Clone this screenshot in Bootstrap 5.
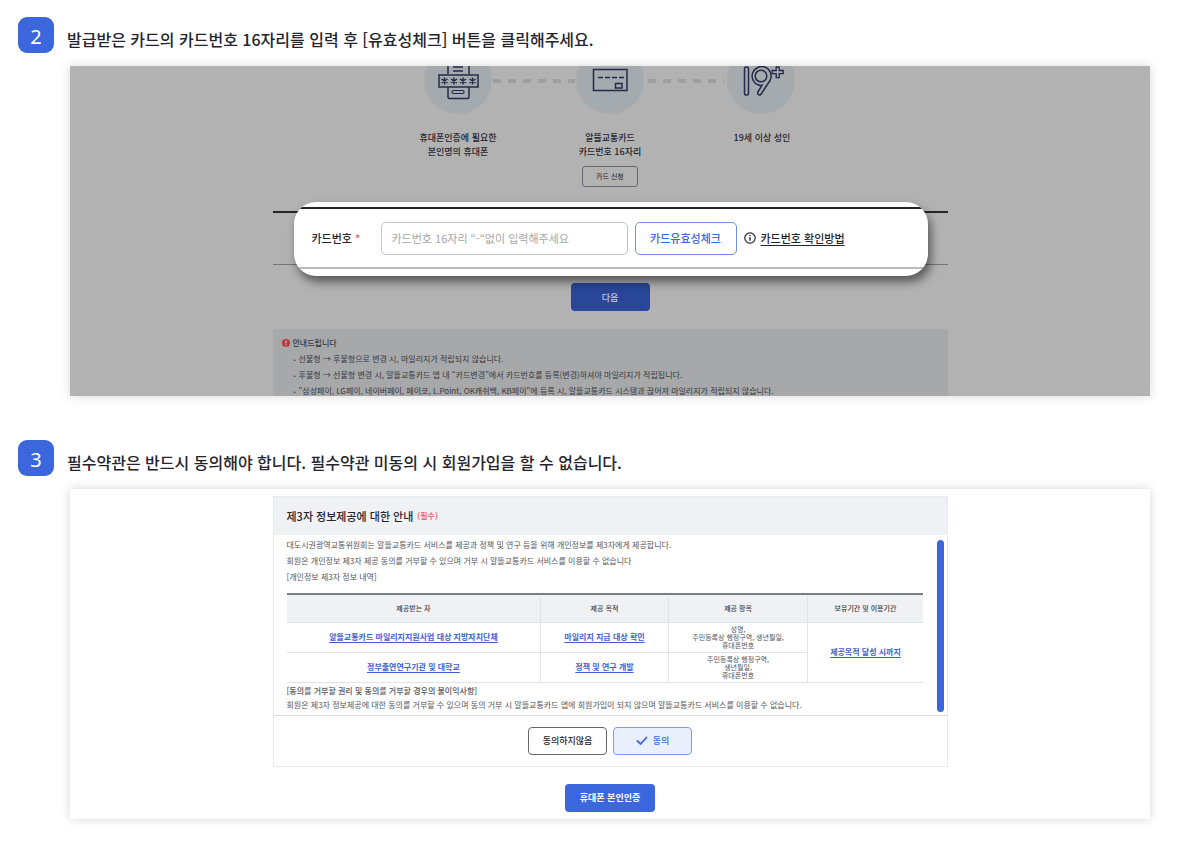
<!DOCTYPE html>
<html lang="ko">
<head>
<meta charset="utf-8">
<meta name="viewport" content="width=device-width, initial-scale=1">
<title>회원가입 안내</title>
<link href="https://cdn.jsdelivr.net/npm/bootstrap@5.3.0/dist/css/bootstrap.min.css" rel="stylesheet">
<style>
  :root { --brand: #3b66dc; --ink: #24242e; }
  body { font-family: "Noto Sans CJK KR", "Liberation Sans", sans-serif; color: var(--ink); background: #fff; }
  .guide { padding: 17px 40px 30px 18px; }
  .step + .step { margin-top: 44px; }
  .step-no { width: 36px; height: 36px; border-radius: 9px; background: var(--brand); color: #fff; font: 20px/40px "Noto Sans", sans-serif; text-align: center; flex: none; }
  .step-title { font-size: 16px; line-height: 24px; font-weight: 500; color: var(--ink); margin: 10px 0 0 13px; }
  .shot { margin: 13px 0 0 52px; box-shadow: 0 0 10px rgba(0,0,0,.16); overflow: hidden; }
  .pane { width: 100%; max-width: 675px; margin: 0 auto; }
  .btn { --bs-btn-padding-x: 0; --bs-btn-padding-y: 0; --bs-btn-border-radius: 4px; --bs-btn-line-height: 1; }

  .dimmed { background: #b2b2b2; }
  .needs { max-width: 456px; margin: 0 auto; }
  .needs svg { display: block; width: 100%; height: auto; }
  .needs-labels { padding-top: 17px; height: 97px; font-size: 9px; line-height: 14px; font-weight: 500; }
  .apply-btn { --bs-btn-font-size: 7px; --bs-btn-border-color: #666870; --bs-btn-color: #24242e; --bs-btn-border-radius: 3px; width: 56px; height: 21px; margin-top: 7px; }
  .field-band { height: 54px; border-top: 2px solid #25252b; border-bottom: 1px solid #75767a; }
  .spotlight { top: -11px; left: 21px; right: 20px; height: 74px; border-radius: 22px; background: #fff; box-shadow: 3px 6px 10px rgba(0,0,0,.5); padding: 5px 0 7px; overflow: hidden; }
  .spotlight-row { height: 62px; border-top: 2px solid #24242c; border-bottom: 2px solid #bcbcbc; padding: 0 18px; font-size: 11px; font-weight: 500; }
  .req { color: #f0565b; }
  .card-label { width: 69px; }
  .card-input { width: 247px; height: 33px; font-size: 11px; border-color: #c4c4c8; border-radius: 5px; padding: 0 10px; }
  .card-input::placeholder { color: #a5a5a8; }
  .check-btn { --bs-btn-font-size: 11px; --bs-btn-font-weight: 500; --bs-btn-color: #3b66dc; --bs-btn-border-color: #6d8de6; --bs-btn-border-radius: 5px; width: 102px; height: 33px; margin: 0 7px; }
  .how-link { color: var(--ink); margin-left: 5px; text-underline-offset: 2px; }
  .next-btn { --bs-btn-bg: #294698; --bs-btn-color: #c3cbe0; --bs-btn-font-size: 9px; --bs-btn-font-weight: 500; width: 79px; height: 28px; margin: 18px 0; }
  .notice { background: #a7a8aa; border-radius: 3px 3px 0 0; padding: 6px 9px 0; font-size: 8px; line-height: 16px; color: #37383f; }
  .notice-title { font-weight: 500; gap: 3px; }
  .notice ul { list-style: none; padding: 0; margin: 0 0 -3px 12px; }
  .notice li { height: 16px; white-space: nowrap; }
  .notice li::before { content: "•"; font-size: 6px; line-height: 1; margin-right: 3px; }

  .consent { border: 1px solid #eaeaec; }
  .consent-shot { padding: 7px 0; }
  .consent-head { background: #f0f1f5; height: 38px; padding: 0 13px; font-size: 11px; font-weight: 500; }
  .consent-head small { font-size: 8px; margin-left: 4px; }
  .consent-body { padding: 2px 3px 3px 13px; font-size: 8px; line-height: 16px; color: #55555c; border-bottom: 1px solid #dcdde0; }
  .scroll-thumb { width: 7px; border-radius: 4px; background: var(--brand); margin: 3px 0 0 14px; flex: none; }
  .terms { table-layout: fixed; width: 100%; margin: 8px 0 1px; font-size: 7px; line-height: 8px; text-align: center; border-top: 2px solid #7b7d83; border-bottom: 1px solid #cfd0d3; border-collapse: collapse; }
  .terms th { background: #f0f1f5; font-weight: 500; height: 28px; color: #3c3c44; }
  .terms td { height: 30px; }
  .terms th, .terms td { padding: 0; border: 0 solid #e2e3e6; border-bottom-width: 1px; vertical-align: middle; }
  .terms th + th, .terms td + td { border-left-width: 1px; }
  .terms a { color: #3f5fd0; font-size: 8px; font-weight: 700; text-underline-offset: 2px; }
  .terms-foot { line-height: 14px; }
  .choices { height: 50px; gap: 6px; }
  .choices .btn { --bs-btn-font-size: 9px; --bs-btn-font-weight: 500; width: 79px; height: 28px; }
  .no-btn { --bs-btn-color: #24242e; --bs-btn-border-color: #66676d; }
  .yes-btn { --bs-btn-color: #3b66dc; --bs-btn-bg: #e9effb; --bs-btn-border-color: #7f9ce6; gap: 5px; }
  .verify-btn { --bs-btn-bg: #3b66dc; --bs-btn-color: #fff; --bs-btn-font-size: 9px; --bs-btn-font-weight: 700; width: 90px; height: 28px; margin-top: 17px; }
</style>
</head>
<body>
<main class="guide">
  <section class="step">
    <div class="d-flex">
      <span class="step-no">2</span>
      <h2 class="step-title">발급받은 카드의 카드번호 16자리를 입력 후 [유효성체크] 버튼을 클릭해주세요.</h2>
    </div>
    <div class="shot dimmed">
      <div class="pane">
        <div class="needs">
          <svg viewBox="0 0 456 48" fill="none" stroke="#262a48" stroke-width="1.5" aria-hidden="true">
            <g fill="#a5aaaf" stroke="none"><circle cx="76" cy="14" r="34"/><circle cx="228" cy="14" r="34"/><circle cx="379" cy="14" r="34"/></g>
            <path d="M111 15h82M266 15h76" stroke="#9d9fa1" stroke-width="4" stroke-dasharray="8 7"/>
            <path d="M66 0v8M87 0v8M71 1h10M71 5h10M66 21v10q0 1.500 1.500 1.500h18q1.500 0 1.500-1.500V21"/>
            <rect x="57" y="9" width="39" height="12"/>
            <rect x="70" y="24.500" width="12" height="3" rx="1.500" stroke-width="1.200"/>
            <path d="M62.500 11.500v7M59.500 13l6 4M65.500 13l-6 4M72 11.500v7M69 13l6 4M75 13l-6 4M81 11.500v7M78 13l6 4M84 13l-6 4M90.500 11.500v7M87.500 13l6 4M93.500 13l-6 4" stroke-width="1.500"/>
            <rect x="211.500" y="3.500" width="33.500" height="21"/>
            <path d="M216 11.500h26" stroke-dasharray="5 2"/>
            <rect x="233.500" y="17.500" width="6.500" height="4.500"/>
            <rect x="362.500" y="1" width="4" height="28" rx="1.500"/>
            <path d="M376.500 19A9.500 9.500 0 1 1 388 14.500L379.500 27.500Q378 30 376.200 28.500Q375 27.500 376.200 25.500L380 19.300Q378 19.700 376.500 19Z"/>
            <circle cx="379" cy="10" r="5.800"/>
            <path d="M394.200 1h3v3.500h4v3.200h-4v4h-3v-4h-4V4.500h4Z" stroke-width="1.300"/>
          </svg>
          <div class="needs-labels d-flex text-center">
            <div class="col-4">휴대폰인증에 필요한<br>본인명의 휴대폰</div>
            <div class="col-4">알뜰교통카드<br>카드번호 16자리<br><button type="button" class="btn apply-btn">카드 신청</button></div>
            <div class="col-4">19세 이상 성인</div>
          </div>
        </div>
        <div class="field-band position-relative">
          <div class="spotlight position-absolute">
            <form class="spotlight-row d-flex align-items-center">
              <label class="card-label" for="cardNo">카드번호 <span class="req">*</span></label>
              <input class="form-control card-input" id="cardNo" type="text" placeholder="카드번호 16자리 “-“없이 입력해주세요">
              <button type="button" class="btn check-btn">카드유효성체크</button>
              <svg width="12" height="12" viewBox="0 0 12 12" fill="none" stroke="#24242e" aria-hidden="true"><circle cx="6" cy="6" r="5.200" stroke-width="1.200"/><path d="M6 5.200v3.600M6 3v1.300" stroke-width="1.400"/></svg>
              <a class="how-link" href="#">카드번호 확인방법</a>
            </form>
          </div>
        </div>
        <div class="d-flex justify-content-center"><button type="button" class="btn next-btn border-0">다음</button></div>
        <div class="notice">
          <div class="notice-title d-flex align-items-center">
            <svg width="8" height="8" viewBox="0 0 8 8" aria-hidden="true"><circle cx="4" cy="4" r="4" fill="#b93a3e"/><path d="M4 1.500v3M4 5.400v1.200" stroke="#d6c4c5" stroke-width="1.200"/></svg>
            안내드립니다
          </div>
          <ul>
            <li>선불형 → 후불형으로 변경 시, 마일리지가 적립되지 않습니다.</li>
            <li>후불형 → 선불형 변경 시, 알뜰교통카드 앱 내 “카드변경”에서 카드번호를 등록(변경)하셔야 마일리지가 적립됩니다.</li>
            <li>"삼성페이, LG페이, 네이버페이, 페이코, L.Point, OK캐쉬백, KB페이"에 등록 시, 알뜰교통카드 시스템과 끊어져 마일리지가 적립되지 않습니다.</li>
          </ul>
        </div>
      </div>
    </div>
  </section>

  <section class="step">
    <div class="d-flex">
      <span class="step-no">3</span>
      <h2 class="step-title">필수약관은 반드시 동의해야 합니다. 필수약관 미동의 시 회원가입을 할 수 없습니다.</h2>
    </div>
    <div class="shot consent-shot">
      <div class="pane consent">
        <div class="consent-head d-flex align-items-center">제3자 정보제공에 대한 안내 <small class="req">(필수)</small></div>
        <div class="consent-body d-flex">
          <div class="flex-grow-1">
            <div>대도시권광역교통위원회는 알뜰교통카드 서비스를 제공과 정책 및 연구 등을 위해 개인정보를 제3자에게 제공합니다.</div>
            <div>회원은 개인정보 제3자 제공 동의를 거부할 수 있으며 거부 시 알뜰교통카드 서비스를 이용할 수 없습니다</div>
            <div>[개인정보 제3자 정보 내역]</div>
            <table class="terms">
              <colgroup><col style="width:40%"><col style="width:20%"><col style="width:22%"><col></colgroup>
              <thead><tr><th>제공받는 자</th><th>제공 목적</th><th>제공 항목</th><th>보유기간 및 이용기간</th></tr></thead>
              <tbody>
                <tr>
                  <td><a href="#">알뜰교통카드 마일리지지원사업 대상 지방자치단체</a></td>
                  <td><a href="#">마일리지 지급 대상 확인</a></td>
                  <td>성명,<br>주민등록상 행정구역, 생년월일,<br>휴대폰번호</td>
                  <td rowspan="2"><a href="#">제공목적 달성 시까지</a></td>
                </tr>
                <tr>
                  <td><a href="#">정부출연연구기관 및 대학교</a></td>
                  <td><a href="#">정책 및 연구 개발</a></td>
                  <td>주민등록상 행정구역,<br>생년월일,<br>휴대폰번호</td>
                </tr>
              </tbody>
            </table>
            <div class="terms-foot"><span class="fw-medium">[동의를 거부할 권리 및 동의를 거부할 경우의 불이익사항]</span><br>회원은 제3자 정보제공에 대한 동의를 거부할 수 있으며 동의 거부 시 알뜰교통카드 앱에 회원가입이 되지 않으며 알뜰교통카드 서비스를 이용할 수 없습니다.</div>
          </div>
          <div class="scroll-thumb"></div>
        </div>
        <div class="choices d-flex justify-content-center align-items-center">
          <button type="button" class="btn no-btn">동의하지않음</button>
          <button type="button" class="btn yes-btn d-inline-flex align-items-center justify-content-center"><svg width="12" height="10" viewBox="0 0 12 10" fill="none" stroke="currentColor" stroke-width="1.800" aria-hidden="true"><path d="M1 4.500l3.500 3.500L11 1"/></svg>동의</button>
        </div>
      </div>
      <div class="d-flex justify-content-center"><button type="button" class="btn verify-btn border-0">휴대폰 본인인증</button></div>
    </div>
  </section>
</main>
<script src="https://cdn.jsdelivr.net/npm/bootstrap@5.3.0/dist/js/bootstrap.bundle.min.js"></script>
</body>
</html>
